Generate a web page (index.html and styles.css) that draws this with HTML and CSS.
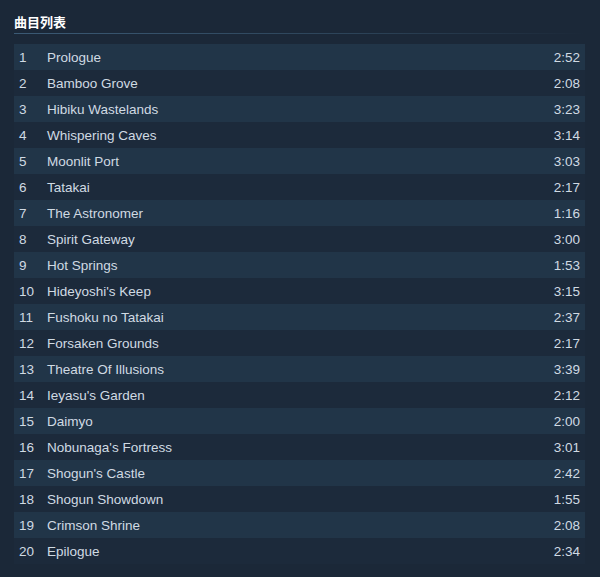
FILE: index.html
```html
<!DOCTYPE html>
<html lang="zh">
  <head>
    <meta charset="utf-8">
    <title>曲目列表</title>
    <link rel="stylesheet" href="styles.css">
  </head>
  <body>
    <div class="tracklist">
      <h2 class="title">曲目列表</h2>
      <div class="rows">
        <div class="row"><span class="num">1</span><span class="name">Prologue</span><span class="len">2:52</span></div>
        <div class="row"><span class="num">2</span><span class="name">Bamboo Grove</span><span class="len">2:08</span></div>
        <div class="row"><span class="num">3</span><span class="name">Hibiku Wastelands</span><span class="len">3:23</span></div>
        <div class="row"><span class="num">4</span><span class="name">Whispering Caves</span><span class="len">3:14</span></div>
        <div class="row"><span class="num">5</span><span class="name">Moonlit Port</span><span class="len">3:03</span></div>
        <div class="row"><span class="num">6</span><span class="name">Tatakai</span><span class="len">2:17</span></div>
        <div class="row"><span class="num">7</span><span class="name">The Astronomer</span><span class="len">1:16</span></div>
        <div class="row"><span class="num">8</span><span class="name">Spirit Gateway</span><span class="len">3:00</span></div>
        <div class="row"><span class="num">9</span><span class="name">Hot Springs</span><span class="len">1:53</span></div>
        <div class="row"><span class="num">10</span><span class="name">Hideyoshi's Keep</span><span class="len">3:15</span></div>
        <div class="row"><span class="num">11</span><span class="name">Fushoku no Tatakai</span><span class="len">2:37</span></div>
        <div class="row"><span class="num">12</span><span class="name">Forsaken Grounds</span><span class="len">2:17</span></div>
        <div class="row"><span class="num">13</span><span class="name">Theatre Of Illusions</span><span class="len">3:39</span></div>
        <div class="row"><span class="num">14</span><span class="name">Ieyasu's Garden</span><span class="len">2:12</span></div>
        <div class="row"><span class="num">15</span><span class="name">Daimyo</span><span class="len">2:00</span></div>
        <div class="row"><span class="num">16</span><span class="name">Nobunaga's Fortress</span><span class="len">3:01</span></div>
        <div class="row"><span class="num">17</span><span class="name">Shogun's Castle</span><span class="len">2:42</span></div>
        <div class="row"><span class="num">18</span><span class="name">Shogun Showdown</span><span class="len">1:55</span></div>
        <div class="row"><span class="num">19</span><span class="name">Crimson Shrine</span><span class="len">2:08</span></div>
        <div class="row"><span class="num">20</span><span class="name">Epilogue</span><span class="len">2:34</span></div>
      </div>
    </div>
  </body>
</html>
```

FILE: styles.css
```css
html { box-sizing : border-box }
*, *:before, *:after { box-sizing : inherit }

:root {
  --c-bg : #1b2838;
  --c-row-a : #213548;
  --c-row-b : #1c2a3b;
  --c-fg : #d0dae3;
  --c-title : #ffffff;
  --c-rule : #3b5a75;

  --f-sans : "Liberation Sans", Arial, "Noto Sans CJK SC", sans-serif;
}

body {
  margin : 0;
  background-color : var(--c-bg);
  font-family : var(--f-sans);
}

.tracklist {
  padding : 15px 15px 0 14px;
}

.title {
  margin : 0;
  padding-bottom : 2px;
  font-size : 13px;
  line-height : 16px;
  font-weight : bold;
  color : var(--c-title);
  border-bottom : 1px solid transparent;
  border-image : linear-gradient(to right, var(--c-rule), #2c4358 60%, var(--c-bg)) 1;
}

.rows {
  margin-top : 10px;
}

.row {
  display : flex;
  align-items : center;
  height : 26px;
  padding : 0 5px;
  font-size : 13.5px;
  color : var(--c-fg);
  background-color : var(--c-row-b);
}

.row:nth-child(odd) { background-color : var(--c-row-a) }

.num { width : 28px }
.name { flex : 1 }
.len { text-align : right }
```
